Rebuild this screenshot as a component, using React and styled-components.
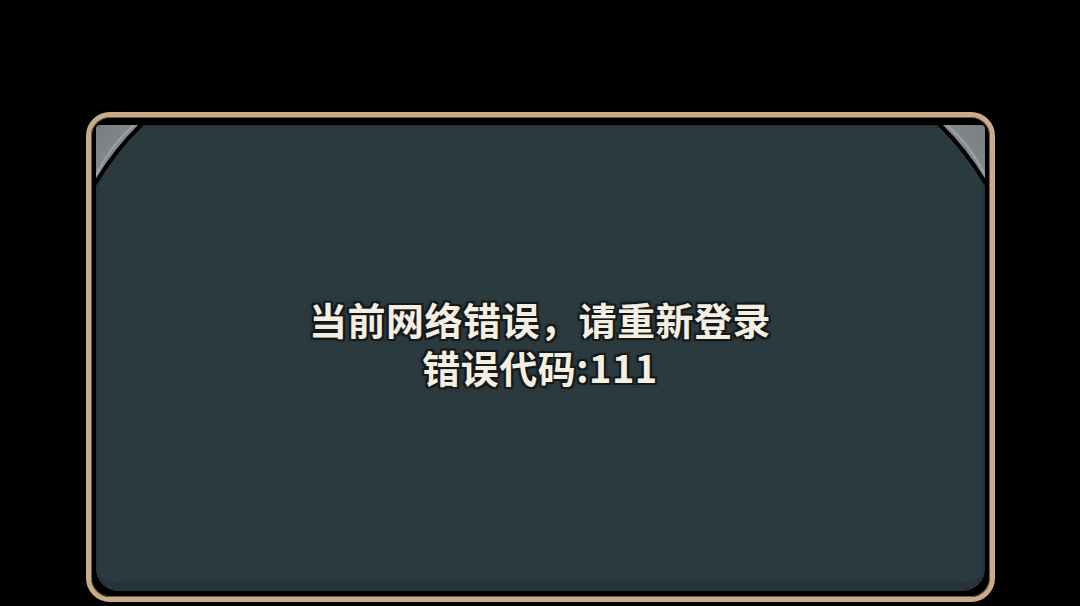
import React from 'react';
import styled, { createGlobalStyle } from 'styled-components';

const GlobalStyle = createGlobalStyle`
  html, body {
    margin: 0;
    padding: 0;
    background: #000;
  }
`;

const Screen = styled.div`
  width: 1080px;
  height: 606px;
  box-sizing: border-box;
  padding-top: 112px;
  display: flex;
  justify-content: center;
  align-items: flex-start;
  background: #000;
`;

// tan outer rim of the dialog
const Frame = styled.div`
  width: 909px;
  height: 490px;
  box-sizing: border-box;
  border: 5px solid #c9ab8a;
  border-radius: 24px;
  background: #000;
  padding: 8px 5px 6px 5px;
  display: flex;
  box-shadow: inset 0 0 0 1px #6b5a48;
`;

const Well = styled.div`
  position: relative;
  flex: 1;
  display: flex;
  border-radius: 4px 4px 22px 22px;
  overflow: hidden;
`;

const Panel = styled.div`
  flex: 1;
  display: flex;
  flex-direction: column;
  align-items: center;
  justify-content: center;
  padding-bottom: 30px;
  background: #2b3a3f;
  border-radius: 4px 4px 22px 22px;
  box-shadow:
    inset 0 -10px 0 -2px #263338,
    inset 0 0 0 3px #27353a;
`;

// grey plate that fills a top corner, cut by the panel's curved edge
const CornerPlate = styled.svg`
  position: absolute;
  top: 0;
  ${({ $side }) => ($side === 'right' ? 'right: 0; transform: scaleX(-1);' : 'left: 0;')}
  width: 50px;
  height: 62px;
`;

function Corner({ side }) {
  const id = `plate-${side}`;
  return (
    <CornerPlate $side={side} viewBox="0 0 50 62">
      <defs>
        <linearGradient id={id} x1="0" y1="0" x2="1" y2="1">
          <stop offset="0" stopColor="#777d81" />
          <stop offset="0.6" stopColor="#868c90" />
          <stop offset="1" stopColor="#a2a7aa" />
        </linearGradient>
      </defs>
      <path d="M0 0 H44 Q18 24 0 57 Z" fill={`url(#${id})`} />
      <path d="M38 0 Q14 21 0 50" fill="none" stroke="#a9aeb1" strokeWidth="2" opacity="0.7" />
      <path d="M46 -1 Q19 25 -1 59" fill="none" stroke="#000" strokeWidth="4" />
    </CornerPlate>
  );
}

const Message = styled.p`
  margin: 0;
  font-family: "Noto Sans CJK SC", "Noto Sans", sans-serif;
  font-weight: 700;
  font-size: 38px;
  line-height: 48px;
  letter-spacing: 0.5px;
  color: #f5efe2;
  text-align: center;
  text-shadow:
    2px 0 0 #141a1c, -2px 0 0 #141a1c, 0 2px 0 #141a1c, 0 -2px 0 #141a1c,
    2px 2px 0 #141a1c, -2px 2px 0 #141a1c, 2px -2px 0 #141a1c, -2px -2px 0 #141a1c,
    0 0 4px #141a1c;
`;

export default function App() {
  return (
    <>
      <GlobalStyle />
      <Screen>
        <Frame>
          <Well>
            <Panel>
              <Message>
                当前网络错误，请重新登录
                <br />
                错误代码:111
              </Message>
            </Panel>
            <Corner side="left" />
            <Corner side="right" />
          </Well>
        </Frame>
      </Screen>
    </>
  );
}
